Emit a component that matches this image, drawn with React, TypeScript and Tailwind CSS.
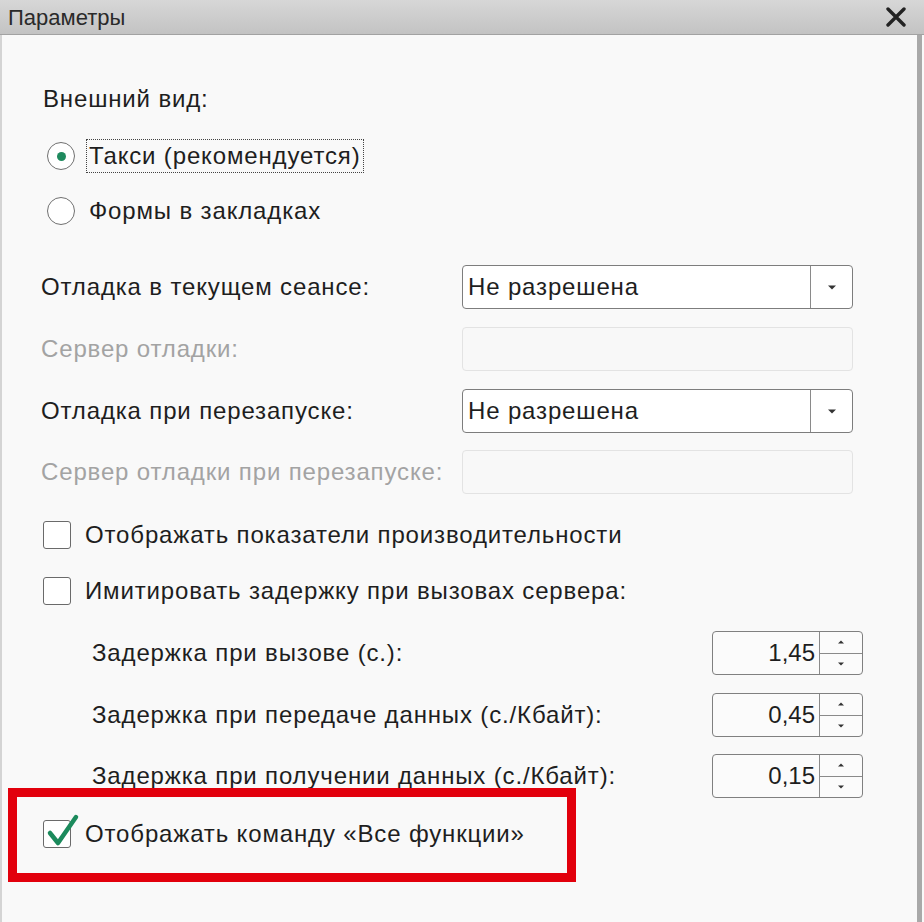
import React from "react";

const font = { fontFamily: '"Liberation Sans", Arial, sans-serif' };

function Arrow({ up = false, size = 8 }: { up?: boolean; size?: number }) {
  return (
    <svg width={size} height={size / 2 + 1} viewBox="0 0 8 5" className={up ? "rotate-180" : ""}>
      <path d="M0 0.5 L8 0.5 L4 4.5 Z" fill="#333" />
    </svg>
  );
}

function Select({ value }: { value: string }) {
  return (
    <div className="flex h-[44px] w-[391px] rounded-[4px] border border-[#7d7d7d] bg-white">
      <div className="flex flex-1 items-center pl-[5px] text-[24px] text-[#1e1e1e]">{value}</div>
      <div className="flex w-[42px] items-center justify-center border-l border-[#8a8a8a]">
        <Arrow />
      </div>
    </div>
  );
}

function Disabled() {
  return <div className="h-[44px] w-[391px] rounded-[4px] border border-[#e3e3e3] bg-[#f8f8f8]" />;
}

function Spin({ value }: { value: string }) {
  return (
    <div className="flex h-[44px] w-[151px] rounded-[4px] border border-[#808080] bg-[#fbfbfb] tracking-normal">
      <div className="flex flex-1 items-center justify-end pr-[4px] text-[24px] text-[#1e1e1e]">{value}</div>
      <div className="flex w-[43px] flex-col border-l border-[#8a8a8a]">
        <div className="flex flex-1 items-center justify-center border-b border-[#8a8a8a]">
          <Arrow up size={6} />
        </div>
        <div className="flex flex-1 items-center justify-center">
          <Arrow size={6} />
        </div>
      </div>
    </div>
  );
}

function Check({ checked = false }: { checked?: boolean }) {
  return (
    <div className="relative h-[28px] w-[28px] shrink-0 rounded-[3px] border border-[#6a6a6a] bg-white">
      {checked && (
        <svg className="absolute -top-[8px] left-[2px]" width="34" height="34" viewBox="0 0 34 34">
          <path d="M4 20 L12 30 L30 4" fill="none" stroke="#1b8a5c" strokeWidth="4.5" strokeLinecap="round" strokeLinejoin="round" />
        </svg>
      )}
    </div>
  );
}

function Radio({ on = false }: { on?: boolean }) {
  return (
    <div className="flex h-[28px] w-[28px] shrink-0 items-center justify-center rounded-full border border-[#707070] bg-white">
      {on && <div className="h-[9px] w-[9px] rounded-full bg-[#1f8a5e]" />}
    </div>
  );
}

export default function App() {
  return (
    <div className="relative h-[922px] w-[924px] overflow-hidden bg-[#f9f9f9]" style={font}>
      <div className="flex h-[35px] items-center justify-between border-b border-[#a2a2a2] bg-gradient-to-b from-[#d7d7d7] to-[#c3c3c3] pl-[8px] pr-[18px]">
        <span className="text-[22px] text-[#2a2a2a]">Параметры</span>
        <svg width="20" height="20" viewBox="0 0 20 20">
          <path d="M2 2 L18 18 M18 2 L2 18" stroke="#222" strokeWidth="3.4" strokeLinecap="round" />
        </svg>
      </div>

      <div className="mr-[2px] flex h-[887px] flex-col border-r-[5px] border-l-[2px] border-r-[#a9a9a9] border-l-[#d4d4d4] pl-[39px] text-[24px] tracking-[0.85px] text-[#1e1e1e]">
        <div className="mt-[50px] flex h-[28px] items-center pl-[2px]">Внешний вид:</div>

        <div className="mt-[26px] flex h-[34px] items-center gap-[11px] pl-[6px]">
          <Radio on />
          <span className="flex h-[34px] items-center border border-dotted border-[#444] px-[2px]">Такси (рекомендуется)</span>
        </div>
        <div className="mt-[21px] flex h-[34px] items-center gap-[14px] pl-[6px]">
          <Radio />
          <span>Формы в закладках</span>
        </div>

        <div className="mt-[37px] flex h-[44px] items-center">
          <div className="w-[421px]">Отладка в текущем сеансе:</div>
          <Select value="Не разрешена" />
        </div>
        <div className="mt-[18px] flex h-[44px] items-center">
          <div className="w-[421px] text-[#a3a3a3]">Сервер отладки:</div>
          <Disabled />
        </div>
        <div className="mt-[18px] flex h-[44px] items-center">
          <div className="w-[421px]">Отладка при перезапуске:</div>
          <Select value="Не разрешена" />
        </div>
        <div className="mt-[17px] flex h-[44px] items-center">
          <div className="w-[421px] text-[#a3a3a3]">Сервер отладки при перезапуске:</div>
          <Disabled />
        </div>

        <div className="mt-[27px] flex h-[28px] items-center gap-[14px] pl-[2px]">
          <Check />
          <span>Отображать показатели производительности</span>
        </div>
        <div className="mt-[28px] flex h-[28px] items-center gap-[14px] pl-[2px]">
          <Check />
          <span>Имитировать задержку при вызовах сервера:</span>
        </div>

        <div className="mt-[26px] flex h-[44px] items-center pl-[51px]">
          <div className="w-[620px]">Задержка при вызове (с.):</div>
          <Spin value="1,45" />
        </div>
        <div className="mt-[18px] flex h-[44px] items-center pl-[51px]">
          <div className="w-[620px]">Задержка при передаче данных (с./Кбайт):</div>
          <Spin value="0,45" />
        </div>
        <div className="mt-[17px] flex h-[44px] items-center pl-[51px]">
          <div className="w-[620px]">Задержка при получении данных (с./Кбайт):</div>
          <Spin value="0,15" />
        </div>

        <div className="mt-[22px] flex h-[28px] items-center gap-[14px] pl-[2px]">
          <Check checked />
          <span>Отображать команду «Все функции»</span>
        </div>
      </div>

      {/* annotation frame */}
      <div className="absolute left-[8px] top-[788px] h-[94px] w-[568px] border-[9px] border-[#e2000c]" />
    </div>
  );
}
